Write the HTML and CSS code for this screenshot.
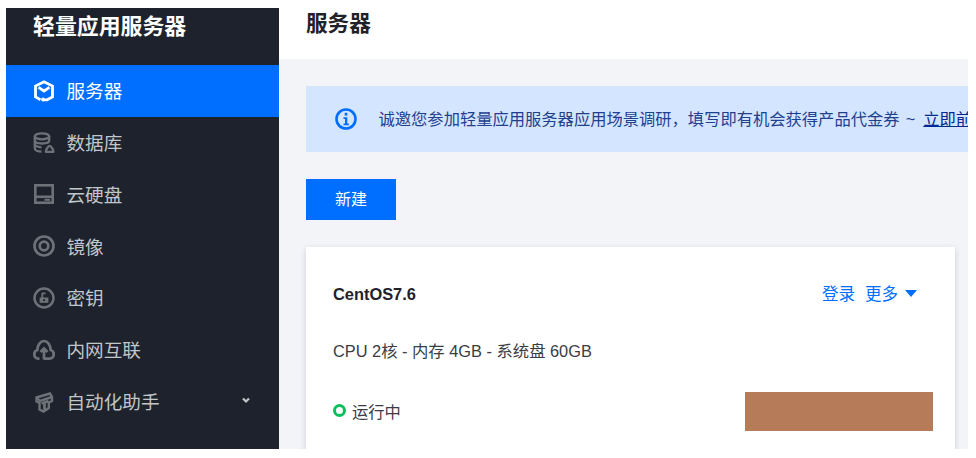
FILE: index.html
```html
<!DOCTYPE html>
<html lang="zh-CN">
<head>
<meta charset="utf-8">
<title>轻量应用服务器</title>
<link rel="stylesheet" href="styles.css">
</head>
<body>
<div class="app">
  <aside class="sidebar">
    <div class="brand">轻量应用服务器</div>
    <nav class="nav">
      <a class="nav-item active">
        <svg class="nav-icon" viewBox="0 0 22 22" fill="none" stroke="currentColor" stroke-width="2.800"><path d="M7.500 19.700 2.500 17V6L11 1.800 19.500 6v11l-5.500 2.800h-3.500"/><path d="M5.500 7.300l5.500 3.700 5.500-3.700"/><circle cx="10" cy="19.500" r="1.500" fill="currentColor" stroke-width="1"/></svg>
        <span>服务器</span>
      </a>
      <a class="nav-item">
        <svg class="nav-icon" viewBox="0 0 22 22" fill="none" stroke="currentColor" stroke-width="2.300"><ellipse cx="9" cy="4.300" rx="7.200" ry="3"/><path d="M1.800 4.300v12c0 2 3 3.400 6.700 3.400"/><path d="M16.200 4.300v4.500c0 1.500-3.200 2.700-7.200 2.700s-7.200-1.200-7.200-2.700"/><path d="M1.800 12c0 1.800 3 3.300 6.700 3.300"/><path d="M13 19.800h7.300c.6-1-2.200-6-3.700-6s-4.200 5-3.600 6z"/></svg>
        <span>数据库</span>
      </a>
      <a class="nav-item">
        <svg class="nav-icon" viewBox="0 0 22 22" fill="none" stroke="currentColor" stroke-width="2.600"><rect x="2.300" y="2.300" width="17.400" height="17.400"/><path d="M2 13.800h18"/><path d="M11.500 16.800h5.500" stroke-width="2"/></svg>
        <span>云硬盘</span>
      </a>
      <a class="nav-item">
        <svg class="nav-icon" viewBox="0 0 22 22" fill="none" stroke="currentColor" stroke-width="2.700"><circle cx="11" cy="11" r="9.500"/><circle cx="11" cy="11" r="4.300"/></svg>
        <span>镜像</span>
      </a>
      <a class="nav-item">
        <svg class="nav-icon" viewBox="0 0 22 22" fill="none" stroke="currentColor" stroke-width="2.500"><circle cx="11" cy="11" r="9.500"/><path d="M9 6.300h3.500M9.300 6v5" stroke-width="1.800"/><rect x="6.600" y="10.500" width="8.800" height="5.300" fill="currentColor" stroke="none"/><rect x="10" y="12.300" width="2" height="1.700" fill="#1e222d" stroke="none"/></svg>
        <span>密钥</span>
      </a>
      <a class="nav-item">
        <svg class="nav-icon" viewBox="0 0 22 22" fill="none" stroke="currentColor" stroke-width="2.700"><path d="M6.500 19.700H5.300C3 19.700 1.300 17.700 1.300 15.300c0-2 1.200-3.700 3-4.300C4.500 6 7.500 2 11 2s6.500 4 6.700 9c1.800.6 3 2.300 3 4.300 0 2.400-1.700 4.400-4 4.400H11"/><path d="M11 20.500V10M7.500 13 11 9.500 14.500 13"/></svg>
        <span>内网互联</span>
      </a>
      <a class="nav-item">
        <svg class="nav-icon" viewBox="0 0 22 22" fill="none" stroke="currentColor" stroke-width="2.400"><path d="M3.500 6.500 17 2.500l2 3.500v4l-3.200 1.500v5.500L10.500 20.500 6.500 18.500V12L3.500 10.500z"/><path d="M4 7l3 3 12-4"/><path d="M8.500 12.500l7-2.500M11.500 12v8" stroke-width="2.800"/></svg>
        <span>自动化助手</span>
        <svg class="nav-chevron" viewBox="0 0 10 10" fill="none" stroke="currentColor" stroke-width="2.200"><path d="M2 3.500 5 6.500l3-3"/></svg>
      </a>
    </nav>
  </aside>
  <div class="content">
    <header class="page-header"><h1>服务器</h1></header>
    <main class="main">
      <div class="notice">
        <svg class="notice-icon" viewBox="0 0 22 22"><circle cx="11" cy="11" r="9.500" fill="none" stroke="#006eff" stroke-width="2.600"/><rect x="9.700" y="4.800" width="2.600" height="2.800" fill="#006eff"/><path d="M8.500 9.300h3.800v6.200h1.500v1.700H8.500v-1.700h1.500v-4.500H8.500z" fill="#006eff"/></svg>
        <p class="notice-text">诚邀您参加轻量应用服务器应用场景调研，填写即有机会获得产品代金券 ~ <a class="notice-link">立即前往</a></p>
      </div>
      <button class="btn-primary"><span class="btn-label">新建</span></button>
      <section class="card">
        <div class="card-head">
          <h2>CentOS7.6</h2>
          <div class="card-actions">
            <a>登录</a>
            <a class="more">更多<span class="caret"></span></a>
          </div>
        </div>
        <div class="card-spec">CPU 2核 - 内存 4GB - 系统盘 60GB</div>
        <div class="card-foot">
          <div class="status"><span class="status-dot"></span>运行中</div>
          <div class="redacted"></div>
        </div>
      </section>
    </main>
  </div>
</div>
</body>
</html>
```

FILE: styles.css
```css
* { box-sizing: border-box; }
html, body { height: 100%; }
body {
  margin: 0;
  padding: 8px 8px 9px 6px;
  background: #fff;
  overflow: hidden;
  font-family: "Liberation Sans", "Noto Sans CJK SC", sans-serif;
}
.app { display: flex; height: 100%; }
.sidebar {
  flex: 0 0 273px;
  background: #1e222d;
  color: #c1c6c8;
}
.brand {
  height: 57px;
  padding: 6px 0 0 27px;
  color: #fff;
  font-size: 21.9px;
  line-height: 25px;
  font-weight: 700;
}
.nav { display: flex; flex-direction: column; }
.nav-item {
  display: flex;
  align-items: center;
  height: 51.8px;
  padding: 0 28px 0 27px;
  font-size: 18.6px;
  color: #c1c6c8;
}
.nav-item span { margin-top: -2.5px; }
.nav-item.active { background: #006eff; color: #fff; }
.nav-icon { flex: 0 0 22px; width: 22px; height: 22px; margin-right: 11.5px; color: #6b7278; }
.active .nav-icon { color: #fff; }
.nav-chevron { width: 10px; height: 10px; margin-left: auto; margin-top: -4px; color: #c1c6c8; }
.content { flex: 1; min-width: 0; display: flex; flex-direction: column; }
.page-header { flex: 0 0 51px; background: #fff; padding: 3px 0 0 27px; }
.page-header h1 { margin: 0; font-size: 21.6px; line-height: 25px; font-weight: 700; color: #1f2229; }
.main {
  flex: 1;
  min-height: 0;
  overflow: hidden;
  background: #f2f4f8;
  padding: 27px 13px 0 27px;
  display: flex;
  flex-direction: column;
  align-items: flex-start;
}
.notice {
  flex: 0 0 66px;
  width: 700px;
  margin-bottom: 27px;
  display: flex;
  align-items: center;
  padding-left: 29px;
  background: #d4e5ff;
  overflow: hidden;
}
.notice-icon { flex: 0 0 22px; width: 22px; height: 22px; margin-right: 21.500px; }
.notice-text { margin: 0 0 2px; white-space: nowrap; font-size: 16.3px; word-spacing: 1.6px; color: #1f3f8f; }
.notice-link { color: #00288f; text-decoration: underline; margin-left: 2px; }
.btn-primary {
  flex: 0 0 41px;
  width: 90px;
  margin-bottom: 27px;
  border: 0;
  padding: 0 0 3px;
  background: #006eff;
  color: #fff;
  font: inherit;
  font-size: 16px;
}
.card {
  flex: 0 0 auto;
  width: 649px;
  height: 240px;
  padding: 34px 22px 0 27px;
  background: #fff;
  box-shadow: 0 2px 6px rgba(54, 58, 80, .2);
}
.card-head { display: flex; justify-content: space-between; align-items: center; height: 26px; }
.card-head h2 { margin: 0; font-size: 16.400px; line-height: 26px; font-weight: 700; color: #1f2229; }
.card-actions { display: flex; gap: 10px; font-size: 16.500px; line-height: 22px; color: #006eff; padding-right: 16px; margin-top: -1px; }
.more { display: flex; align-items: center; }
.caret {
  margin-left: 7px;
  width: 0;
  height: 0;
  border-left: 6px solid transparent;
  border-right: 6px solid transparent;
  border-top: 7px solid #006eff;
}
.card-spec { margin-top: 31px; height: 26px; line-height: 26px; font-size: 16.350px; color: #3a3d44; }
.card-foot { display: flex; justify-content: space-between; align-items: center; margin-top: 27px; height: 40px; }
.status { display: flex; align-items: center; font-size: 16.300px; margin-top: -1px; color: #3a3d44; }
.status-dot {
  width: 13px;
  height: 13px;
  margin-right: 6px;
  border: 3px solid #0abf5b;
  border-radius: 50%;
}
.redacted { width: 188px; height: 39px; background: #b67b58; }
```
